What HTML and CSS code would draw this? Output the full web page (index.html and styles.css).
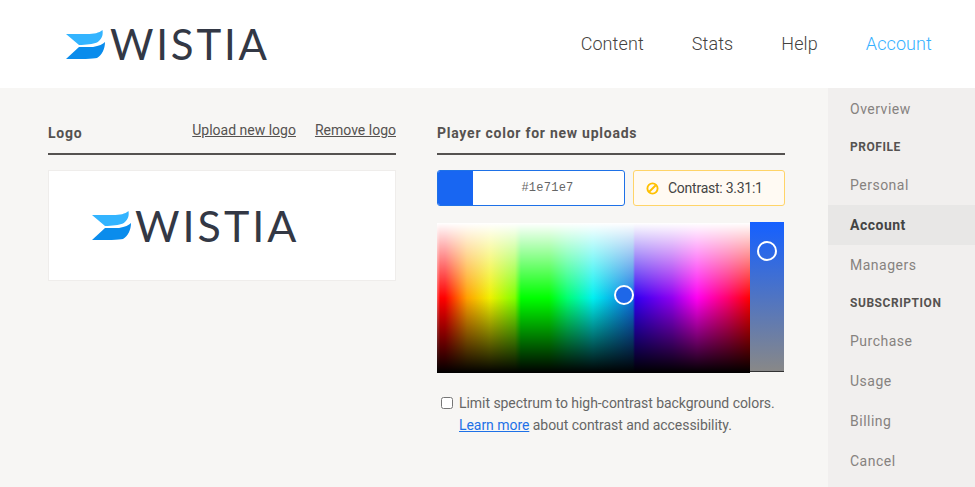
FILE: index.html
```html
<!DOCTYPE html>
<html>
<head>
    <meta name="viewport" content="width=device-width, initial-scale=1.0">
    <title>Account</title>
    <link rel="stylesheet" href="styles.css">
</head>
<body>
    <header class="top-bar">
        <div class="brand">
            <svg class="brand-mark" viewBox="0 0 40 31" width="40" height="31">
                <path fill="#33b4ff" d="M0 5 L21 5 C28 5 33 4 36.5 1 C37.5 7 35 11 31 13.5 C27 15 20 16 13 16 Z"/>
                <path fill="#0a8cec" d="M13 18 L27 18 C33 17 37 15 39 13 C39 20 36 26 31 29 C27 30 15 30 0 30 Z"/>
            </svg>
            <span class="brand-name">WISTIA</span>
        </div>
        <nav class="top-nav">
            <a href="#">Content</a>
            <a href="#">Stats</a>
            <a href="#">Help</a>
            <a href="#" class="active">Account</a>
        </nav>
    </header>

    <div class="page">
        <main class="settings">
            <section>
                <div class="section-head">
                    <h2>Logo</h2>
                    <div class="section-links">
                        <a href="#">Upload new logo</a>
                        <a href="#">Remove logo</a>
                    </div>
                </div>
                <div class="logo-box">
                    <div class="brand brand-large">
                        <svg class="brand-mark" viewBox="0 0 40 31" width="40" height="31">
                            <path fill="#33b4ff" d="M0 5 L21 5 C28 5 33 4 36.5 1 C37.5 7 35 11 31 13.5 C27 15 20 16 13 16 Z"/>
                            <path fill="#0a8cec" d="M13 18 L27 18 C33 17 37 15 39 13 C39 20 36 26 31 29 C27 30 15 30 0 30 Z"/>
                        </svg>
                        <span class="brand-name">WISTIA</span>
                    </div>
                </div>
            </section>

            <section>
                <div class="section-head">
                    <h2>Player color for new uploads</h2>
                </div>
                <div class="color-row">
                    <div class="color-input">
                        <span class="swatch"></span>
                        <span class="hex">#1e71e7</span>
                    </div>
                    <div class="contrast">
                        <svg viewBox="0 0 14 14" width="13" height="13">
                            <circle cx="7" cy="7" r="5.5" fill="none" stroke="#ffc000" stroke-width="2"/>
                            <path d="M3.5 10.5 L10.5 3.5" stroke="#ffc000" stroke-width="2"/>
                        </svg>
                        <span>Contrast: 3.31:1</span>
                    </div>
                </div>
                <div class="picker">
                    <div class="spectrum">
                        <span class="knob spectrum-knob"></span>
                    </div>
                    <div class="lightness">
                        <span class="knob lightness-knob"></span>
                    </div>
                </div>
                <label class="limit">
                    <input type="checkbox">
                    <span>Limit spectrum to high-contrast background colors.<br><a href="#">Learn more</a> about contrast and accessibility.</span>
                </label>
            </section>
        </main>

        <aside class="side-nav">
            <a href="#">Overview</a>
            <h3>PROFILE</h3>
            <a href="#">Personal</a>
            <a href="#" class="current">Account</a>
            <a href="#">Managers</a>
            <h3>SUBSCRIPTION</h3>
            <a href="#">Purchase</a>
            <a href="#">Usage</a>
            <a href="#">Billing</a>
            <a href="#">Cancel</a>
        </aside>
    </div>
</body>
</html>
```

FILE: styles.css
```css
* {
    box-sizing: border-box;
    margin: 0;
    padding: 0;
}

html, body {
    height: 100%;
    overflow: hidden;
}

body {
    font-family: Roboto, Arial, sans-serif;
    font-size: 14px;
    color: #555250;
    background-color: #f7f6f4;
}

a {
    color: inherit;
    text-decoration: none;
}

.top-bar {
    height: 88px;
    background-color: white;
    display: flex;
    align-items: center;
    justify-content: space-between;
    padding: 0 43px 0 66px;
}

.brand {
    display: flex;
    align-items: center;
    gap: 6px;
}

.brand-mark {
    flex: none;
}

.brand-name {
    font-family: Lato, Arial, sans-serif;
    font-size: 42px;
    line-height: 31px;
    letter-spacing: 2.8px;
    margin-left: -2px;
    color: #333845;
}

.brand-large {
    gap: 5px;
}

.brand-large .brand-name {
    font-size: 43px;
    letter-spacing: 3px;
}

.top-nav {
    display: flex;
    gap: 48px;
    font-size: 18px;
    font-weight: 300;
    letter-spacing: 0.1px;
    padding-bottom: 2px;
    color: #444240;
}

.top-nav .active {
    color: #35b0ff;
}

.page {
    display: flex;
    height: 399px;
}

.settings {
    flex: 1;
    display: grid;
    grid-template-columns: 348px 348px;
    column-gap: 41px;
    padding: 32px 43px 0 48px;
}

.section-head {
    height: 35px;
    display: flex;
    justify-content: space-between;
    border-bottom: 2px solid #555250;
    padding-top: 2px;
}

h2 {
    font-size: 14px;
    font-weight: 700;
    letter-spacing: 0.75px;
    line-height: 22px;
}

.section-links {
    display: flex;
    gap: 19px;
    line-height: 20px;
    letter-spacing: 0;
    margin-top: -2px;
}

.section-links a {
    text-decoration: underline;
}

.logo-box {
    margin-top: 15px;
    height: 111px;
    background-color: white;
    border: 1px solid #efedeb;
    display: flex;
    align-items: center;
    padding-left: 43px;
}

.color-row {
    display: flex;
    gap: 8px;
    margin-top: 15px;
    height: 36px;
}

.color-input {
    width: 188px;
    display: flex;
    align-items: center;
    background-color: white;
    border: 1px solid #1e71e7;
    border-radius: 3px;
    overflow: hidden;
}

.swatch {
    width: 35px;
    height: 100%;
    background-color: #1866f2;
}

.hex {
    flex: 1;
    text-align: center;
    font-family: "Liberation Mono", monospace;
    font-size: 12px;
    letter-spacing: 0.25px;
    color: #666;
    padding-right: 2px;
}

.contrast {
    flex: 1;
    display: flex;
    align-items: center;
    gap: 9px;
    padding-left: 12px;
    background-color: #fffaf3;
    border: 1px solid #ffd468;
    border-radius: 3px;
    letter-spacing: -0.25px;
    color: #444;
}

.picker {
    display: flex;
    width: 347px;
    height: 151px;
    margin-top: 16px;
}

.spectrum {
    position: relative;
    width: 313px;
    margin-top: 1px;
    background:
        linear-gradient(to bottom, #fff 0%, rgba(255,255,255,0) 50%, rgba(0,0,0,0) 50%, #000 100%),
        linear-gradient(to right, #ff6060 0, #ff0000 3px, #ff0000 8px, #ffa000 30px, #f0f000 53px, #80ff00 78px, #00ff00 84px, #00ff00 112px, #00ff70 130px, #00f0f0 156px, #1070e0 196px, #3000f0 198px, #9000f0 235px, #ff00f0 260px, #ff0070 290px, #ff0000 313px);
}

.lightness {
    position: relative;
    width: 34px;
    height: 150px;
    background: linear-gradient(to bottom, #1560ff, #888888);
    border-bottom: 1px solid #333;
}

.knob {
    position: absolute;
    width: 20px;
    height: 20px;
    border: 2px solid white;
    border-radius: 50%;
    background-color: #1e67e8;
}

.spectrum-knob {
    left: 177px;
    top: 62px;
}

.lightness-knob {
    left: 7px;
    top: 19px;
    background-color: transparent;
}

.limit {
    display: flex;
    gap: 6px;
    margin-top: 19px;
    padding-left: 4px;
    line-height: 22px;
    letter-spacing: -0.05px;
    color: #666;
}

.limit input {
    width: 12px;
    height: 12px;
    margin-top: 5px;
}

.limit span {
    white-space: nowrap;
}

.limit a {
    color: #1e71e7;
    text-decoration: underline;
}

.side-nav {
    width: 147px;
    padding-top: 1px;
    background-color: #f1efee;
}

.side-nav a {
    display: block;
    height: 40px;
    line-height: 40px;
    padding-left: 22px;
    color: #86827f;
    letter-spacing: 0.5px;
}

.side-nav .current {
    background-color: #e8e7e6;
    color: #444;
    font-weight: 700;
}

.side-nav h3 {
    height: 36px;
    line-height: 36px;
    padding-left: 22px;
    font-size: 12px;
    font-weight: 700;
    letter-spacing: 0.55px;
    color: #555250;
}
```
